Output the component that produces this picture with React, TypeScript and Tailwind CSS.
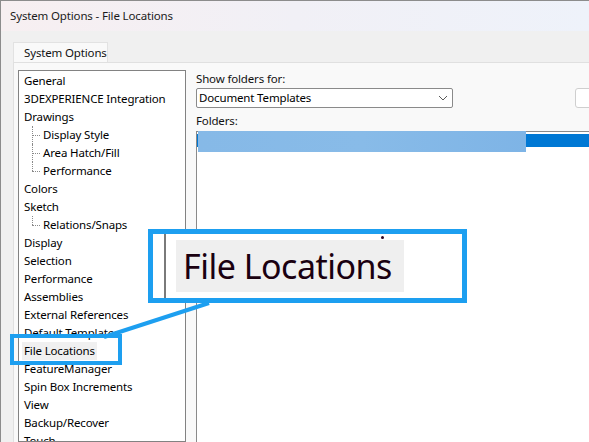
import React from "react";

const font = { fontFamily: '"Noto Sans", "Open Sans", sans-serif' };

type Item = { label: string; child?: boolean; selected?: boolean; last?: boolean };

const items: Item[] = [
  { label: "General" },
  { label: "3DEXPERIENCE Integration" },
  { label: "Drawings" },
  { label: "Display Style", child: true },
  { label: "Area Hatch/Fill", child: true },
  { label: "Performance", child: true, last: true },
  { label: "Colors" },
  { label: "Sketch" },
  { label: "Relations/Snaps", child: true, last: true },
  { label: "Display" },
  { label: "Selection" },
  { label: "Performance" },
  { label: "Assemblies" },
  { label: "External References" },
  { label: "Default Templates" },
  { label: "File Locations", selected: true },
  { label: "FeatureManager" },
  { label: "Spin Box Increments" },
  { label: "View" },
  { label: "Backup/Recover" },
  { label: "Touch" },
];

function TreeRow({ item }: { item: Item }) {
  if (item.child) {
    return (
      <div className="relative h-[18px] flex items-center pl-[23px]">
        {/* dotted connector */}
        <span
          className={`absolute left-[13px] top-0 w-0 border-l border-dotted border-[#8a8a8a] ${
            item.last ? "h-[9px]" : "h-[18px]"
          }`}
        />
        <span className="absolute left-[13px] top-[9px] w-[8px] h-0 border-t border-dotted border-[#8a8a8a]" />
        <span className="px-[1px] leading-[18px] whitespace-nowrap">{item.label}</span>
      </div>
    );
  }
  return (
    <div className="h-[18px] flex items-center pl-[3px]">
      <span className={`px-[2px] leading-[18px] whitespace-nowrap ${item.selected ? "bg-[#f0f0f0]" : ""}`}>
        {item.label}
      </span>
    </div>
  );
}

export default function App() {
  return (
    <div
      className="relative w-[589px] h-[442px] overflow-hidden flex flex-col bg-[#f0f0f0] border-l border-t border-[#8c8c8c] text-[11.5px] tracking-[-0.15px] text-black"
      style={font}
    >
      {/* Title bar */}
      <div className="h-[30px] shrink-0 flex items-center px-[9px] bg-gradient-to-r from-[#f7eff1] via-[#f1f0f6] to-[#eef2fa] text-[#1b1b1b] whitespace-nowrap">
        System Options - File Locations
      </div>

      {/* Tab strip */}
      <div className="h-[31px] shrink-0 flex items-end pl-[12px]">
        <div className="w-[95px] h-[20px] bg-[#f9f9f9] border border-b-0 border-[#e2e2e2] flex items-center pl-[10px] text-[#111] whitespace-nowrap">
          System Options
        </div>
      </div>

      {/* Panel */}
      <div className="flex-1 min-h-0 ml-[12px] bg-[#f9f9f9] border-t border-l border-[#e0e0e0] flex pt-[7px] pl-[4px]">
        {/* Tree */}
        <div className="w-[168px] shrink-0 bg-white border border-[#828282] pt-[1px] overflow-hidden">
          {items.map((it, i) => (
            <TreeRow key={i} item={it} />
          ))}
        </div>

        {/* Right column */}
        <div className="flex-1 min-w-0 flex flex-col pl-[10px] pt-[1px]">
          <div className="h-[16px] leading-[16px] text-[#111] whitespace-nowrap">Show folders for:</div>
          <div className="flex items-center mt-[1px] h-[20px]">
            <div className="w-[257px] h-[20px] shrink-0 bg-white border border-[#8a8a8a] rounded-[2px] flex items-center justify-between pl-[2px] pr-[4px]">
              <span className="whitespace-nowrap">Document Templates</span>
              <svg width="10" height="6" viewBox="0 0 10 6">
                <polyline points="1,1 5,5 9,1" fill="none" stroke="#5a5a5a" strokeWidth="1" />
              </svg>
            </div>
            <div className="ml-[122px] w-[80px] h-[20px] shrink-0 bg-white border border-[#cfcfcf] rounded-[3px]" />
          </div>
          <div className="h-[16px] leading-[16px] mt-[5px] text-[#111]">Folders:</div>
          <div className="relative flex-1 mt-[2px] bg-white border-t border-l border-[#8a8a8a]">
            <div className="mt-[2px] h-[13px] bg-[#0078d4]" />
            <div className="absolute -top-[1px] left-[1px] w-[328px] h-[21px] bg-gradient-to-r from-[#86b9e7] via-[#88bbe8] to-[#7eb4e6]" />
          </div>
        </div>
      </div>

      {/* Callout: connector */}
      <svg className="absolute left-0 top-0 pointer-events-none" width="589" height="442">
        <line x1="103" y1="336" x2="208" y2="302" stroke="#1d9ff0" strokeWidth="4" />
      </svg>

      {/* Callout: small box */}
      <div className="absolute left-[9px] top-[333px] w-[112px] h-[31px] border-[4px] border-[#1d9ff0]" />

      {/* Callout: magnified box */}
      <div className="absolute left-[147px] top-[228px] w-[319px] h-[74px] border-[5px] border-[#1d9ff0] bg-white flex items-center">
        <div className="ml-[11px] w-[2px] self-stretch bg-[#7a7a7a]" />
        <div className="ml-[10px] w-[228px] h-[52px] bg-[#efefef] flex items-center pl-[7px]">
          <span className="text-[34px] leading-none text-[#1a0010] tracking-[-0.5px] whitespace-nowrap">File Locations</span>
        </div>
        <span className="absolute left-[228px] top-[2px] w-[3px] h-[3px] rounded-full bg-[#2a0020]" />
      </div>
    </div>
  );
}
